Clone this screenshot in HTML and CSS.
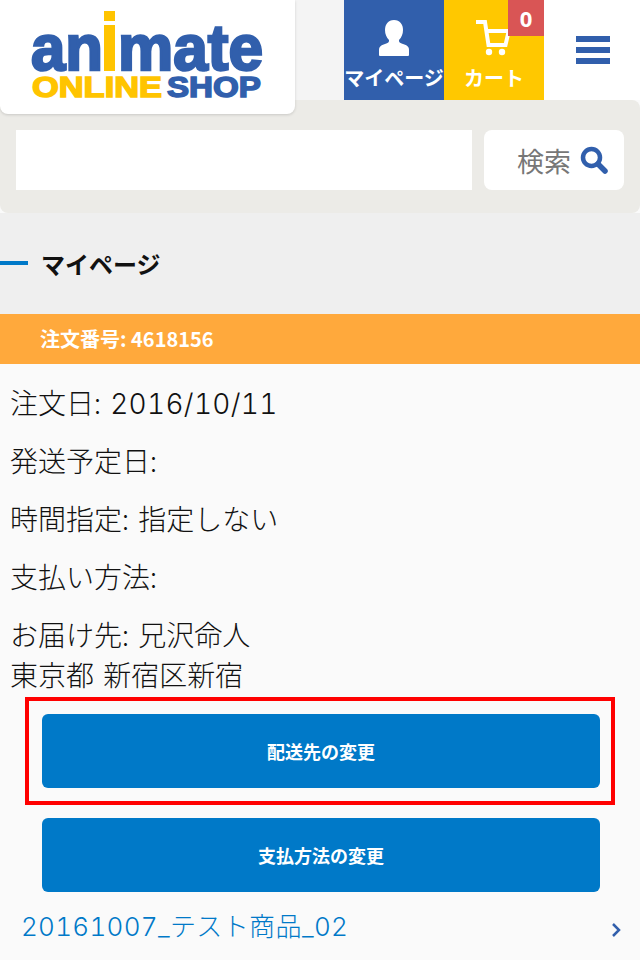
FILE: index.html
```html
<!DOCTYPE html>
<html lang="ja">
<head>
  <meta charset="UTF-8">
  <meta name="viewport" content="width=device-width, initial-scale=1.0">
  <title>マイページ</title>
  <link rel="stylesheet" href="styles.css">
</head>
<body>

  <header class="header">
    <a class="logo" href="#">
      <svg class="logo-svg" width="295" height="114" viewBox="0 0 295 114">
        <text class="logo-big" x="31" y="70" textLength="72" lengthAdjust="spacingAndGlyphs">an</text>
        <rect class="logo-yellow" x="104" y="11" width="11" height="10"/>
        <rect class="logo-yellow" x="104" y="25" width="11" height="46"/>
        <text class="logo-big" x="118" y="70" textLength="145" lengthAdjust="spacingAndGlyphs">mate</text>
        <text class="logo-small logo-small-y" x="32" y="97" textLength="130" lengthAdjust="spacingAndGlyphs">ONLINE</text>
        <text class="logo-small logo-small-b" x="167" y="97" textLength="94" lengthAdjust="spacingAndGlyphs">SHOP</text>
      </svg>
    </a>
    <a class="tab tab-mypage" href="#">
      <svg width="30" height="36" viewBox="0 0 30 36">
        <path d="M15 0c6 0 9 4.500 9 10 0 4-1.500 7.500-4 10-.5 2 1 3 4 4 4 1.300 6 2.500 6 6V35a1 1 0 0 1-1 1H1a1 1 0 0 1-1-1v-5c0-3.500 2-4.700 6-6 3-1 4.500-2 4-4-2.500-2.500-4-6-4-10C6 4.500 9 0 15 0z"/>
      </svg>
      <span class="tab-label">マイページ</span>
    </a>
    <a class="tab tab-cart" href="#">
      <svg class="cart-icon" width="36" height="38" viewBox="0 0 36 38">
        <path class="cart-line" d="M0 3h9l3.500 23h17l3-13"/>
        <path class="cart-line" d="M11 12h24"/>
        <circle cx="13" cy="33" r="3.200"/>
        <circle cx="26" cy="33" r="3.200"/>
      </svg>
      <span class="tab-label">カート</span>
      <span class="cart-count">0</span>
    </a>
    <a class="menu" href="#">
      <span></span><span></span><span></span>
    </a>
  </header>

  <form class="search">
    <input class="search-input" type="text">
    <button class="search-btn" type="button">
      検索
      <svg width="28" height="28" viewBox="0 0 28 28">
        <circle class="search-ring" cx="11.500" cy="11.500" r="8.500"/>
        <path class="search-handle" d="M18 18l7 7"/>
      </svg>
    </button>
  </form>

  <h2 class="page-title">マイページ</h2>

  <div class="order-bar">注文番号: 4618156</div>

  <div class="order">
    <p>注文日: <span class="num">2016/10/11</span></p>
    <p>発送予定日:</p>
    <p>時間指定: 指定しない</p>
    <p>支払い方法:</p>
    <p class="address">お届け先: 兄沢命人<br>東京都 新宿区新宿</p>

    <div class="actions">
      <a class="btn btn-marked" href="#">配送先の変更</a>
      <a class="btn" href="#">支払方法の変更</a>
    </div>

    <a class="item" href="#">
      <span><span class="num">20161007_</span>テスト商品<span class="num">_02</span></span>
      <svg width="12" height="16" viewBox="0 0 12 16">
        <path d="M2 2l6 6-6 6"/>
      </svg>
    </a>
  </div>

</body>
</html>
```

FILE: styles.css
```css
* {
  box-sizing: border-box;
}

html, body {
  height: 960px;
  overflow: hidden;
}

body {
  margin: 0;
  background: #fafafa;
  color: #111;
  font-family: "Noto Sans CJK JP", "Liberation Sans", sans-serif;
}

a {
  text-decoration: none;
  color: inherit;
}

/* header */
.header {
  display: flex;
  height: 100px;
  background: linear-gradient(to right, #f4f4f4 0, #f4f4f4 344px, #fff 344px);
}

.logo {
  position: relative;
  z-index: 1;
  display: block;
  width: 295px;
  height: 114px;
  margin-right: 49px;
  background: #fff;
  border-radius: 0 0 8px 8px;
  box-shadow: 0 1px 3px rgba(0, 0, 0, 0.15);
}

.logo-svg {
  display: block;
}

.logo-big {
  font-family: "Liberation Sans", sans-serif;
  font-weight: bold;
  font-size: 64px;
  fill: #315fac;
  stroke: #315fac;
  stroke-width: 2.500px;
}

.logo-yellow {
  fill: #ffc400;
}

.logo-small {
  font-family: "Liberation Sans", sans-serif;
  font-weight: bold;
  font-size: 29px;
  stroke-width: 1.500px;
}

.logo-small-y {
  fill: #ffc400;
  stroke: #ffc400;
}

.logo-small-b {
  fill: #315fac;
  stroke: #315fac;
}

.tab {
  position: relative;
  display: flex;
  flex-direction: column;
  align-items: center;
  width: 100px;
  height: 100px;
  padding-top: 20px;
  color: #fff;
  fill: #fff;
}

.tab-mypage {
  background: #315fac;
}

.tab-cart {
  padding-top: 19px;
  background: #ffc800;
}

.tab-label {
  margin-top: 8px;
  font-size: 20px;
  font-weight: bold;
  line-height: 28px;
  white-space: nowrap;
}

.tab-cart .tab-label {
  margin-top: 7px;
}

.cart-line {
  fill: none;
  stroke: #fff;
  stroke-width: 4px;
}

.cart-count {
  position: absolute;
  top: 0;
  right: 0;
  width: 36px;
  height: 36px;
  background: #d95555;
  font-family: "Open Sans", "Liberation Sans", sans-serif;
  font-size: 22px;
  font-weight: bold;
  line-height: 36px;
  text-align: center;
}

.menu {
  display: flex;
  flex-direction: column;
  gap: 5px;
  padding: 36px 30px 0 32px;
  width: 96px;
}

.menu span {
  display: block;
  height: 6px;
  background: #315fac;
}

/* search */
.search {
  display: flex;
  justify-content: space-between;
  height: 113px;
  padding: 30px 16px 0;
  background: #ecebe7;
  border-radius: 8px;
}

.search-input {
  width: 456px;
  height: 60px;
  border: none;
  background: #fff;
}

.search-btn {
  display: flex;
  align-items: center;
  justify-content: flex-end;
  gap: 9px;
  width: 140px;
  height: 60px;
  padding: 0 16px 0 0;
  border: none;
  border-radius: 8px;
  background: #fff;
  color: #777;
  font-family: inherit;
  font-size: 27px;
}

.search-ring {
  fill: none;
  stroke: #315fac;
  stroke-width: 4.500px;
}

.search-handle {
  fill: none;
  stroke: #315fac;
  stroke-width: 5.500px;
  stroke-linecap: round;
}

/* title */
.page-title {
  display: flex;
  align-items: center;
  gap: 13px;
  height: 101px;
  margin: 0;
  padding-bottom: 1px;
  background: #efefef;
  font-size: 24px;
  font-weight: bold;
}

.page-title::before {
  content: "";
  width: 28px;
  height: 4px;
  background: #0079c8;
}

.order-bar {
  height: 50px;
  padding-left: 40px;
  background: #ffa93c;
  color: #fff;
  font-size: 20px;
  font-weight: bold;
  line-height: 49px;
}

/* order details */
.order {
  padding: 18px 0 0 10px;
  font-size: 28px;
  font-weight: 300;
  word-spacing: 3px;
}

.order p {
  height: 40px;
  margin: 0 0 18px;
  line-height: 40px;
}

.order .address {
  height: 80px;
  margin-bottom: 0;
}

.num {
  font-family: Inter, "Liberation Sans", sans-serif;
  font-weight: 300;
  font-feature-settings: "tnum";
  letter-spacing: 0.300px;
}

.actions {
  display: flex;
  flex-direction: column;
  gap: 30px;
  width: 558px;
  margin: 20px 0 0 32px;
}

.btn {
  display: block;
  height: 74px;
  background: #0079c8;
  border-radius: 6px;
  color: #fff;
  font-size: 18px;
  font-weight: bold;
  line-height: 74px;
  text-align: center;
}

.btn-marked {
  position: relative;
}

/* red annotation drawn over the screenshot */
.btn-marked::after {
  content: "";
  position: absolute;
  top: -17px;
  left: -17px;
  right: -15px;
  bottom: -17px;
  border: 4px solid #f00;
}

.item {
  display: flex;
  justify-content: space-between;
  align-items: center;
  margin: 11px 17px 0 11px;
  color: #0079c8;
  font-size: 26px;
  letter-spacing: 0.400px;
  line-height: 44px;
}

.item svg {
  margin-top: 8px;
}

.item path {
  fill: none;
  stroke: #315fac;
  stroke-width: 2.500px;
}
```
